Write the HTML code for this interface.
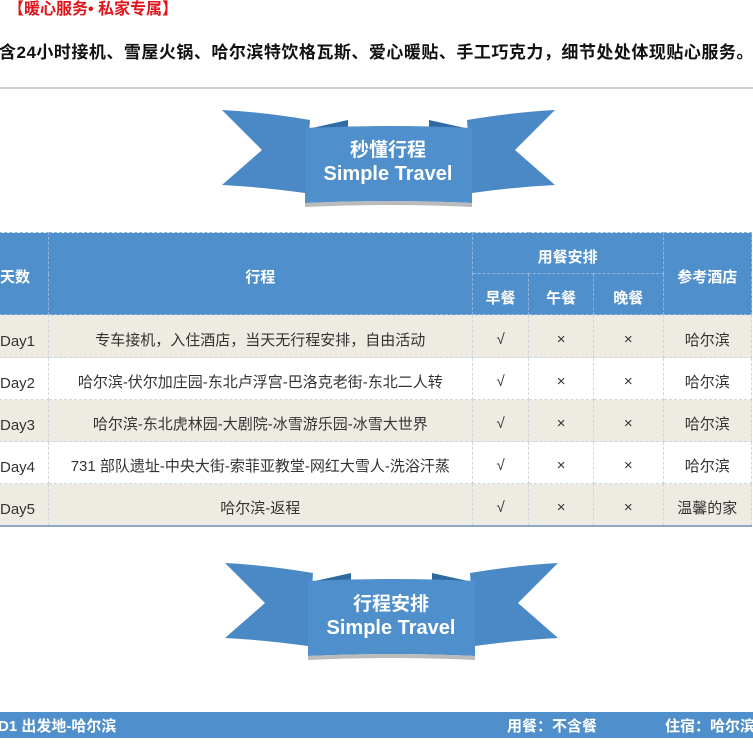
<!DOCTYPE html><html><head><meta charset="utf-8"><style>
body{margin:0;width:753px;height:753px;background:#fff;position:relative;overflow:hidden;font-family:"Liberation Sans","Noto Sans CJK SC",sans-serif}
.a{position:absolute;white-space:nowrap}
table{position:absolute;left:-1px;top:232px;border-collapse:collapse;font-size:15px;color:#333}
td{border:1px dashed #cfd6de;text-align:center;padding:6px 0 0 0}
.h td{background:#4f8fcb;color:#fff;font-weight:bold;border-color:#8fb6de}
.b{background:#eeebe3}
.d{padding-top:10px}
</style></head><body>
<div class="a" style="left:8px;top:-5px;color:#e0141b;font-weight:bold;font-size:16px">【暖心服务• 私家专属】</div>
<div class="a" style="left:-1px;top:38px;color:#111;font-weight:bold;font-size:17px;letter-spacing:0.5px">含24小时接机、雪屋火锅、哈尔滨特饮格瓦斯、爱心暖贴、手工巧克力，细节处处体现贴心服务。</div>
<div class="a" style="left:0;top:87px;width:753px;height:2px;background:#cdd3d9"></div>
<svg class="a" style="left:0;top:0" width="753" height="753">
<g id="r">
<path d="M222 110 Q262 112 310 120 L305 193 Q262 187 222 185 L262 150 Z" fill="#4a89c5"/>
<path d="M555 110 Q515 112 467 120 L472 193 Q515 187 555 185 L515 150 Z" fill="#4a89c5"/>
<path d="M312 128 L348 120 L348 128Z M465 128 L429 120 L429 128Z" fill="#2f6aa3"/>
<path d="M305 128 Q388 124 472 128 L472 203 Q388 199 305 203 Z" fill="#4f8fcb"/>
<path d="M305 203 Q388 199 472 203 L472 207 Q388 203 305 207Z" fill="#bbb"/>
</g>
<use href="#r" transform="translate(3,453)"/>
<rect x="0" y="712" width="753" height="26" fill="#4f8fcb"/>
</svg>
<div class="a" style="left:338px;top:139px;color:#fff;font-weight:bold;font-size:19px;text-align:center;width:100px;line-height:24px">秒懂行程</div>
<div class="a" style="left:288px;top:162px;color:#fff;font-weight:bold;font-size:20px;text-align:center;width:200px;line-height:24px">Simple Travel</div>
<div class="a" style="left:341px;top:593px;color:#fff;font-weight:bold;font-size:19px;text-align:center;width:100px;line-height:24px">行程安排</div>
<div class="a" style="left:291px;top:616px;color:#fff;font-weight:bold;font-size:20px;text-align:center;width:200px;line-height:24px">Simple Travel</div>
<table>
<tr class="h" style="height:41px"><td rowspan="2" style="width:48px;text-align:left">天数</td><td rowspan="2" style="width:426px">行程</td><td colspan="3">用餐安排</td><td rowspan="2" style="width:88px">参考酒店</td></tr>
<tr class="h" style="height:41px"><td style="width:56px">早餐</td><td style="width:64px">午餐</td><td style="width:69px">晚餐</td></tr>
<tr class="b" style="height:43px"><td class="d" style="text-align:left">Day1</td><td>专车接机，入住酒店，当天无行程安排，自由活动</td><td>√</td><td>×</td><td>×</td><td>哈尔滨</td></tr>
<tr style="height:42px"><td class="d" style="text-align:left">Day2</td><td>哈尔滨-伏尔加庄园-东北卢浮宫-巴洛克老街-东北二人转</td><td>√</td><td>×</td><td>×</td><td>哈尔滨</td></tr>
<tr class="b" style="height:42px"><td class="d" style="text-align:left">Day3</td><td>哈尔滨-东北虎林园-大剧院-冰雪游乐园-冰雪大世界</td><td>√</td><td>×</td><td>×</td><td>哈尔滨</td></tr>
<tr style="height:42px"><td class="d" style="text-align:left">Day4</td><td>731 部队遗址-中央大街-索菲亚教堂-网红大雪人-洗浴汗蒸</td><td>√</td><td>×</td><td>×</td><td>哈尔滨</td></tr>
<tr class="b" style="height:42px;border-bottom:2px solid #8fa9c4"><td class="d" style="text-align:left">Day5</td><td>哈尔滨-返程</td><td>√</td><td>×</td><td>×</td><td>温馨的家</td></tr>
</table>
<div class="a" style="left:-2px;top:715px;color:#fff;font-weight:bold;font-size:15px">D1 出发地-哈尔滨</div>
<div class="a" style="left:507px;top:715px;color:#fff;font-weight:bold;font-size:15px">用餐：不含餐</div>
<div class="a" style="left:665px;top:715px;color:#fff;font-weight:bold;font-size:15px">住宿：哈尔滨</div>
</body></html>
